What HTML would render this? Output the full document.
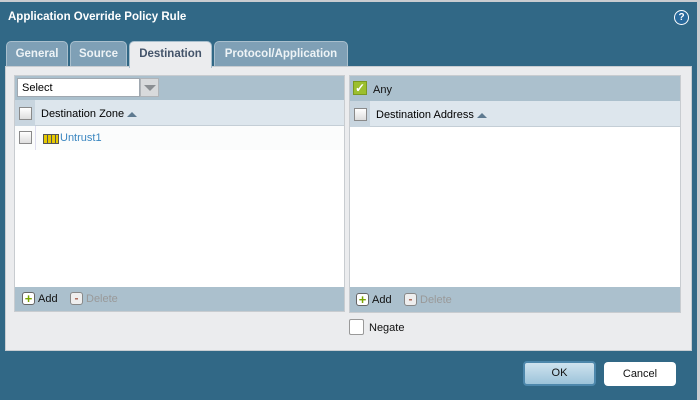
<!DOCTYPE html><html><head><style>
body{margin:0;width:700px;height:400px;background:#316886;font-family:"Liberation Sans",sans-serif;font-size:11px;position:relative;overflow:hidden}
.a{position:absolute}
.tab{position:absolute;top:41px;height:25px;background:#7fa0b6;border:1px solid #a9bfcd;border-bottom:none;border-radius:5px 5px 0 0;color:#eef3f6;font-weight:bold;font-size:11.5px;text-align:center;line-height:24px;box-sizing:border-box}
.cb{position:absolute;width:11px;height:11px;border:1px solid #8a8a8a;background:linear-gradient(#fff,#ddd)}
.ft{color:#111}
</style></head><body>
<div class="a" style="left:0;top:0;width:700px;height:2px;background:#c9ccd0"></div>
<div class="a" style="left:697px;top:0;width:3px;height:400px;background:#c9ccd0"></div>
<div class="a" style="left:8px;top:11px;color:#fff;font-weight:bold;font-size:11.5px">Application Override Policy Rule</div>
<div class="a" style="left:674px;top:10px;width:13px;height:13px;border-radius:50%;background:#2a6a9c;border:1px solid #fff;color:#fff;font-weight:bold;font-size:10px;text-align:center;line-height:13px">?</div>
<div class="tab" style="left:6px;width:62px">General</div>
<div class="tab" style="left:70px;width:57px">Source</div>
<div class="tab" style="left:214px;width:134px">Protocol/Application</div>
<div class="a" style="left:5px;top:66px;width:687px;height:285px;background:#ebecee;border:1px solid #c8cdd2;box-sizing:border-box"></div>
<div class="tab" style="left:129px;width:83px;height:27px;background:#ebecee;color:#44546a">Destination</div>
<div class="a" style="left:14px;top:75px;width:331px;height:237px;background:#fff;border:1px solid #c8ccd0;box-sizing:border-box"></div>
<div class="a" style="left:15px;top:76px;width:329px;height:24px;background:#abc0cd"></div>
<div class="a" style="left:17px;top:78px;width:123px;height:19px;background:#fff;border:1px solid #a0a8b0;box-sizing:border-box;padding:3px 4px;font-size:11px">Select</div>
<div class="a" style="left:140px;top:78px;width:19px;height:19px;background:#d8dadc;border:1px solid #b0b4b8;box-sizing:border-box"></div>
<div class="a" style="left:144px;top:85px;border-left:6px solid transparent;border-right:6px solid transparent;border-top:6px solid #8b8f93"></div>
<div class="a" style="left:15px;top:100px;width:329px;height:26px;background:#dde6ed;border-bottom:1px solid #c4ced6;box-sizing:border-box"></div>
<div class="a" style="left:15px;top:100px;width:20px;height:26px;background:#c8d5df"></div>
<div class="cb" style="left:19px;top:107px"></div>
<div class="a" style="left:41px;top:108px">Destination Zone</div>
<div class="a" style="left:127px;top:112px;border-left:5px solid transparent;border-right:5px solid transparent;border-bottom:5px solid #5e7a90"></div>
<div class="a" style="left:15px;top:126px;width:329px;height:24px;background:#fbfcfc"></div>
<div class="a" style="left:35px;top:126px;width:1px;height:24px;background:#dde"></div>
<div class="cb" style="left:19px;top:131px"></div>
<div class="a" style="left:43px;top:134px;width:14px;height:8px;background:repeating-linear-gradient(90deg,#e5c800 0 3px,#555 3px 4px);border:1px solid #555"></div>
<div class="a" style="left:60px;top:132px;color:#3a86c0">Untrust1</div>
<div class="a" style="left:15px;top:287px;width:329px;height:24px;background:#abc0cd"></div>
<div class="a" style="left:22px;top:292px;width:11px;height:11px;border:1px solid #666;border-radius:3px;background:#fff;color:#7aa400;font-weight:bold;font-size:13px;line-height:11px;text-align:center">+</div>
<div class="a ft" style="left:38px;top:293px">Add</div>
<div class="a" style="left:70px;top:292px;width:11px;height:11px;border:1px solid #888;border-radius:3px;background:#eee;color:#a65;font-weight:bold;font-size:12px;line-height:10px;text-align:center">-</div>
<div class="a" style="left:86px;top:293px;color:#999">Delete</div>
<div class="a" style="left:349px;top:75px;width:332px;height:238px;background:#fff;border:1px solid #c8ccd0;box-sizing:border-box"></div>
<div class="a" style="left:350px;top:76px;width:330px;height:25px;background:#abc0cd"></div>
<div class="a" style="left:353px;top:81px;width:12px;height:12px;background:#9cbf2e;border:1px solid #7a9a20;color:#fff;font-weight:bold;font-size:12px;line-height:12px;text-align:center">✓</div>
<div class="a ft" style="left:373px;top:84px">Any</div>
<div class="a" style="left:350px;top:101px;width:330px;height:26px;background:#dde6ed;border-bottom:1px solid #c4ced6;box-sizing:border-box"></div>
<div class="a" style="left:350px;top:101px;width:20px;height:26px;background:#c8d5df"></div>
<div class="cb" style="left:354px;top:108px"></div>
<div class="a" style="left:376px;top:109px">Destination Address</div>
<div class="a" style="left:477px;top:113px;border-left:5px solid transparent;border-right:5px solid transparent;border-bottom:5px solid #5e7a90"></div>
<div class="a" style="left:350px;top:287px;width:330px;height:25px;background:#abc0cd"></div>
<div class="a" style="left:356px;top:293px;width:11px;height:11px;border:1px solid #666;border-radius:3px;background:#fff;color:#7aa400;font-weight:bold;font-size:13px;line-height:11px;text-align:center">+</div>
<div class="a ft" style="left:372px;top:294px">Add</div>
<div class="a" style="left:404px;top:293px;width:11px;height:11px;border:1px solid #888;border-radius:3px;background:#eee;color:#a65;font-weight:bold;font-size:12px;line-height:10px;text-align:center">-</div>
<div class="a" style="left:420px;top:294px;color:#999">Delete</div>
<div class="a" style="left:349px;top:319px;width:13px;height:14px;border:1px solid #999;background:#fff;border-radius:2px"></div>
<div class="a ft" style="left:369px;top:322px">Negate</div>
<div class="a" style="left:523px;top:361px;width:73px;height:25px;border:2px solid #4d87ab;border-radius:4px;background:linear-gradient(#cfe3ef,#9cc3d9);box-sizing:border-box;text-align:center;line-height:21px;color:#111">OK</div>
<div class="a" style="left:604px;top:362px;width:72px;height:24px;border-radius:4px;background:#fff;box-sizing:border-box;text-align:center;line-height:24px;color:#111">Cancel</div>
</body></html>
